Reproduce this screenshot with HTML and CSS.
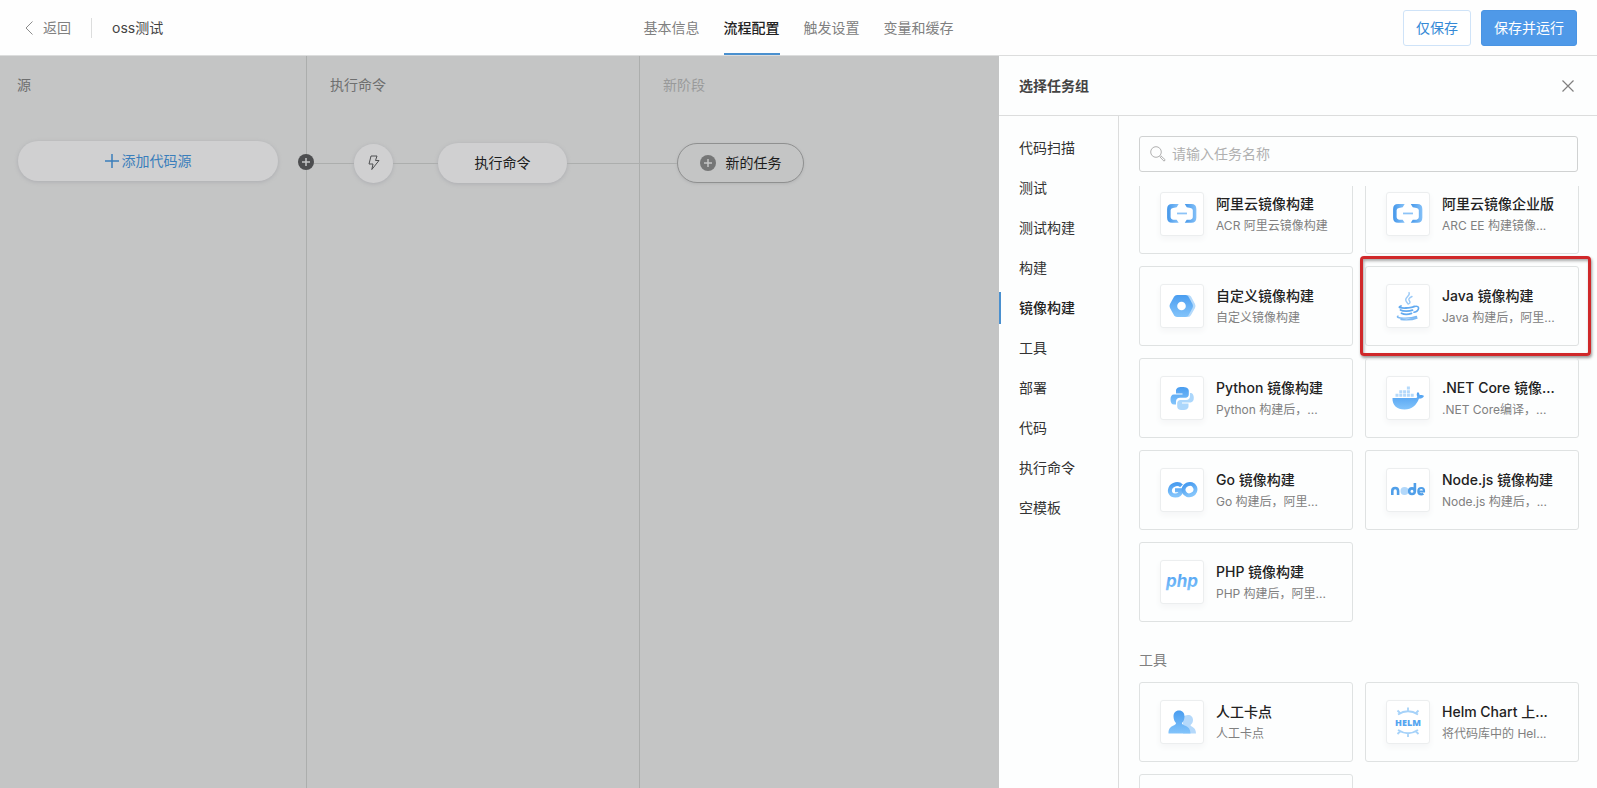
FILE: index.html
```html
<!DOCTYPE html>
<html lang="zh-CN">
<head>
    <meta charset="UTF-8">
    <title>oss测试</title>
    <link rel="stylesheet" href="styles.css">
</head>
<body>
    <!-- shared gradient for the task icons -->
    <svg class="defs" aria-hidden="true">
        <defs>
            <linearGradient id="blue" x1="0" y1="0" x2="1" y2="0">
                <stop offset="0" stop-color="#4597ea"/>
                <stop offset="1" stop-color="#85c1f8"/>
            </linearGradient>
            <linearGradient id="blueDown" x1="0" y1="0" x2="0" y2="1">
                <stop offset="0" stop-color="#4a9df0"/>
                <stop offset="1" stop-color="#83c4fb"/>
            </linearGradient>
        </defs>
        <symbol id="acr" viewBox="2 2 29 29">
            <path d="M13.500 7.500H7.500Q3 7.500 3 12v8q0 4.500 4.500 4.500h6l-1.800-2.800H8.300Q6.200 21 6.200 19.500v-6.500q0-1.500 2.100-1.900l3.400-.8z" fill="url(#blue)"/>
            <path d="M19 7.500h6q4.500 0 4.500 4.500v8q0 4.500-4.500 4.500h-6l1.800-2.800h3.400q2.100-.7 2.100-2.200v-6.500q0-1.500-2.100-1.900l-3.400-.8z" fill="url(#blue)"/>
            <rect x="12" y="15.200" width="9" height="1.600" fill="#8cc3f7"/>
        </symbol>
    </svg>

    <header class="topbar">
        <div class="topbar-left">
            <a href="#" class="back">
                <svg width="8" height="14" viewBox="0 0 8 14"><path d="M7.500.5 1 7l6.500 6.500" fill="none" stroke="#8c8c8c"/></svg>
                返回
            </a>
            <span class="divider"></span>
            <span class="pipeline-name">oss测试</span>
        </div>
        <nav class="tabs">
            <a href="#">基本信息</a>
            <a href="#" class="active">流程配置</a>
            <a href="#">触发设置</a>
            <a href="#">变量和缓存</a>
        </nav>
        <div class="actions">
            <button class="btn">仅保存</button>
            <button class="btn btn-primary">保存并运行</button>
        </div>
    </header>

    <main class="content">
        <section class="stage stage-source">
            <h2>源</h2>
            <button class="node node-source">
                <svg width="14" height="14" viewBox="0 0 14 14"><path d="M7 0v14M0 7h14" stroke="#3a7ebb" stroke-width="1.500"/></svg>
                添加代码源
            </button>
            <button class="add-stage" aria-label="添加阶段">
                <svg width="16" height="16" viewBox="0 0 16 16"><circle cx="8" cy="8" r="8" fill="#4d4e50"/><path d="M8 4v8M4 8h8" stroke="#c4c5c5" stroke-width="1.500"/></svg>
            </button>
        </section>
        <section class="stage stage-run">
            <h2>执行命令</h2>
            <div class="flow">
                <span class="line line-first"></span>
                <button class="node node-trigger" aria-label="触发">
                    <svg width="14" height="16" viewBox="0 0 14 16"><path d="M4 1h6L8.500 5.500H12L4.800 14.500 6 9H2z" fill="none" stroke="#4d4e50" stroke-linejoin="round"/></svg>
                </button>
                <span class="line line-mid"></span>
                <button class="node node-task">执行命令</button>
                <span class="line line-rest"></span>
            </div>
        </section>
        <section class="stage stage-new">
            <h2>新阶段</h2>
            <div class="flow">
                <span class="line line-new"></span>
                <button class="node node-new">
                    <svg width="16" height="16" viewBox="0 0 16 16"><circle cx="8" cy="8" r="8" fill="#757676"/><path d="M8 4v8M4 8h8" stroke="#c4c5c5" stroke-width="1.500"/></svg>
                    新的任务
                </button>
            </div>
        </section>

        <aside class="panel">
            <div class="panel-header">
                <h3>选择任务组</h3>
                <button class="close" aria-label="关闭">
                    <svg width="12" height="12" viewBox="0 0 12 12"><path d="m.5.5 11 11M11.500.5l-11 11" stroke="#808080" stroke-width="1.200"/></svg>
                </button>
            </div>
            <div class="panel-body">
                <nav class="groups">
                    <a href="#">代码扫描</a>
                    <a href="#">测试</a>
                    <a href="#">测试构建</a>
                    <a href="#">构建</a>
                    <a href="#" class="active">镜像构建</a>
                    <a href="#">工具</a>
                    <a href="#">部署</a>
                    <a href="#">代码</a>
                    <a href="#">执行命令</a>
                    <a href="#">空模板</a>
                </nav>
                <div class="tasks">
                    <label class="search">
                        <svg width="16" height="16" viewBox="0 0 16 16" fill="none" stroke="#b0b0b0"><circle cx="6" cy="6" r="5.300"/><path d="m9.800 10.800 1-1 4.400 4-1.200 1.400z"/></svg>
                        <input type="text" placeholder="请输入任务名称" aria-label="请输入任务名称">
                    </label>
                    <div class="task-list">
                        <div class="grid">
                            <button class="card">
                                <span class="icon"><svg viewBox="0 0 32 32"><use href="#acr"/></svg></span>
                                <span class="text"><b>阿里云镜像构建</b><small>ACR 阿里云镜像构建</small></span>
                            </button>
                            <button class="card">
                                <span class="icon"><svg viewBox="0 0 32 32"><use href="#acr"/></svg></span>
                                <span class="text"><b>阿里云镜像企业版</b><small>ARC EE 构建镜像...</small></span>
                            </button>
                            <button class="card">
                                <span class="icon"><svg viewBox="0 0 32 32">
                                    <path d="M12 5h10q2 0 3 1.500l4 7.500q1 2 0 4l-4 7q-1 2-3 2H12z" fill="#b5dafb"/>
                                    <path d="M11 5h8.500q2 0 3 1.700l4 7.300q1 2 0 4l-4 7.300q-1 1.700-3 1.700H11q-2 0-3-1.700L4 18q-1-2 0-4l4-7.300Q9 5 11 5z" fill="url(#blueDown)"/>
                                    <circle cx="15.500" cy="16" r="4.300" fill="#fff"/>
                                </svg></span>
                                <span class="text"><b>自定义镜像构建</b><small>自定义镜像构建</small></span>
                            </button>
                            <button class="card highlighted">
                                <span class="icon"><svg viewBox="0 0 32 32" fill="none" stroke="#62aaf0" stroke-linecap="round">
                                    <path d="M17 2.500c2 3.500-5 4.500-3 8.500.5 1 1.500 2 2 3M20 6.500c-3 1.500-4 2.500-2.500 4.500 1 1.500.5 2-1 3" stroke="#9ccaf7" stroke-width="1.400"/>
                                    <path d="M9 16c-4 1.500 0 2.200 5 2 4-.2 8-1 8-1.500" stroke-width="1.800"/>
                                    <path d="M8.500 20c2.500 1.500 8.500 1.500 12 .2M9.500 23.200c2.500 1.400 7 1.300 10 .2" stroke-width="1.800"/>
                                    <path d="M22.500 16.500c6-1.500 5 4.500-.5 5.800" stroke-width="1.600"/>
                                    <path d="M6 26c-4 2.500 12 3 18.500.5M9 29.500c5 .6 12 .2 16-1.500" stroke="#7db9f3" stroke-width="1.400"/>
                                </svg></span>
                                <span class="text"><b>Java 镜像构建</b><small>Java 构建后，阿里...</small></span>
                            </button>
                            <button class="card">
                                <span class="icon"><svg viewBox="0 0 32 32">
                                    <path d="M16 5c-4.500 0-6 1.500-6 4v2.500h6.500v1H8c-2.500 0-3.500 2-3.500 5s1.200 5 3.500 5h2v-2.800c0-2.500 1.500-4 4-4h5.500c2 0 3.300-1.300 3.300-3.200V9c0-2.700-2.300-4-6.800-4z" fill="url(#blueDown)"/>
                                    <path d="M16.500 28c4.500 0 6-1.500 6-4v-2.500H16v-1h8.500c2.300 0 3.300-2 3.300-4.700s-1-4.800-3.300-4.800H24V14c0 2.500-1.500 4-4 4h-5.500c-2 0-3.300 1.300-3.300 3.200V24c0 2.700 1.300 4 5.300 4z" fill="#acd7fc"/>
                                </svg></span>
                                <span class="text"><b>Python 镜像构建</b><small>Python 构建后，...</small></span>
                            </button>
                            <button class="card">
                                <span class="icon"><svg viewBox="0 0 32 32">
                                    <path d="M.5 16H24c1 0 1.500-.7 1-2-.6-1.500-.2-3 1-4 1 .8 1.600 2 1.600 3.200 1.500-.3 3.400 0 4.400.8-1 2-2.800 2.800-5 2.600C24.500 23.500 20 27.500 12.500 27.500 5 27.500.1 23 .5 16z" fill="url(#blueDown)"/>
                                    <path d="M3.500 13.300h18.200M7.300 9.700h10.600M14.900 6h3" stroke="#b4d9fb" stroke-width="3" stroke-dasharray="3 .8"/>
                                </svg></span>
                                <span class="text"><b>.NET Core 镜像...</b><small>.NET Core编译，...</small></span>
                            </button>
                            <button class="card">
                                <span class="icon"><svg viewBox="0 0 32 32" fill="none" stroke="url(#blueDown)" stroke-width="4">
                                    <path d="M15.500 11.800C12.500 8.800 6.500 9.800 4.500 14c-1.800 4 .5 7.500 4.700 7.500 3.500 0 5.600-2 6.200-5.200H9"/>
                                    <ellipse cx="23.500" cy="15.600" rx="6" ry="5.600" transform="rotate(-25 23.500 15.600)"/>
                                </svg></span>
                                <span class="text"><b>Go 镜像构建</b><small>Go 构建后，阿里...</small></span>
                            </button>
                            <button class="card">
                                <span class="icon"><svg class="wide" viewBox="0 0 36 32" fill="none" stroke="#509fe9" stroke-width="2.600">
                                    <path d="M2.300 21v-4q0-3 2.900-3t2.900 3v4"/>
                                    <circle cx="14.500" cy="17" r="4" fill="#b3d8fa" stroke="none"/>
                                    <circle cx="22" cy="17.200" r="2.800"/><path d="M24.900 9v8.500"/>
                                    <path d="M29 17.500h5q.3-3.500-2.700-3.500-3 0-3 3.200t3 3.200q1.200 0 2-.8" stroke-width="2.200"/>
                                </svg></span>
                                <span class="text"><b>Node.js 镜像构建</b><small>Node.js 构建后，...</small></span>
                            </button>
                            <button class="card">
                                <span class="icon"><svg class="wide" viewBox="0 0 36 32"><text x="18" y="21" text-anchor="middle" class="php" fill="url(#blueDown)">php</text></svg></span>
                                <span class="text"><b>PHP 镜像构建</b><small>PHP 构建后，阿里...</small></span>
                            </button>
                        </div>
                        <h4>工具</h4>
                        <div class="grid">
                            <button class="card">
                                <span class="icon"><svg viewBox="0 0 32 32">
                                    <path d="M22 9c3 0 5 2 5 5 0 2-1 4-2.500 5 0 2 5.500 1.500 5.500 8.500H17V10.500Q19 9 22 9z" fill="#b5d9fb"/>
                                    <path d="M13 4.500c3.500 0 5.500 2.500 5.500 6 0 2.500-1 5-2.500 6.500 0 3.500 8.500 1.500 8.500 10.500h-22C2.500 18.500 10 20.500 10 17c-1.500-1.500-2.500-4-2.500-6.500 0-3.500 2-6 5.500-6z" fill="url(#blueDown)"/>
                                </svg></span>
                                <span class="text"><b>人工卡点</b><small>人工卡点</small></span>
                            </button>
                            <button class="card">
                                <span class="icon"><svg viewBox="0 0 32 32" fill="none" stroke="#a6d2f9" stroke-width="1.800">
                                    <path d="M6 8.500q10-6.500 20 0M16 4.500V1.500M8.500 7.500l-3-3M23.500 7.500l3-3"/>
                                    <path d="M6 24q10 6.500 20 0M16 28v3M8.500 25l-3 3M23.500 25l3 3"/>
                                    <text x="16" y="20" text-anchor="middle" class="helm">HELM</text>
                                </svg></span>
                                <span class="text"><b>Helm Chart 上...</b><small>将代码库中的 Hel...</small></span>
                            </button>
                            <button class="card" aria-label="工具"></button>
                        </div>
                    </div>
                </div>
            </div>
        </aside>
    </main>
</body>
</html>
```
FILE: styles.css
```css
* { box-sizing: border-box; }
body { margin: 0; height: 100vh; display: flex; flex-direction: column; overflow: hidden; background: #fdfefe; color: #222; font: 14px/20px Inter, "Noto Sans CJK SC", sans-serif; }
a { color: inherit; text-decoration: none; }
button { font: inherit; color: inherit; padding: 0; border: 0; background: none; cursor: pointer; }
svg { display: block; flex: none; }
h2, h3, h4 { margin: 0; font-size: 14px; }
.defs { position: absolute; width: 0; height: 0; }

/* top bar */
.topbar { flex: none; display: grid; grid-template-columns: 1fr auto 1fr; align-items: center; height: 56px; padding: 0 20px; border-bottom: 1px solid #dcdddd; background: #fefefe; }
.topbar-left { display: flex; align-items: center; gap: 20px; padding-left: 5px; }
.back { display: flex; align-items: center; gap: 10px; color: #808080; }
.divider { width: 1px; height: 20px; background: #dcdddd; }
.pipeline-name { color: #444; }
.tabs { display: flex; gap: 24px; height: 55px; color: #808080; }
.tabs a { line-height: 55px; }
.tabs .active { color: #222; font-weight: 500; border-bottom: 2px solid #4a90cf; }
.actions { display: flex; justify-content: flex-end; gap: 10px; }
.btn { height: 36px; padding: 0 12px; border: 1px solid #cfe3f8; border-radius: 3px; background: #fff; color: #3489d6; }
.btn-primary { border-color: #4a94e3; background: #4f99e8; color: #fff; }

/* pipeline stages */
.content { flex: 1; min-height: 0; display: flex; background: #c4c5c5; }
.stage { position: relative; border-right: 1px solid #acaead; }
.stage h2 { margin: 19px 0 48px; padding-left: 23px; font-weight: 400; color: #6e6f6f; }
.stage-source { flex: 0 0 307px; }
.stage-source h2 { margin-bottom: 46px; padding-left: 17px; }
.stage-run { flex: 0 0 333px; }
.stage-new { flex: 1; border-right: 0; }
.stage-new h2 { color: #999a9a; }
.flow { display: flex; align-items: center; }
.line { height: 1px; background: #acaead; }
.line-first { width: 47px; }
.line-mid { width: 45px; }
.line-rest { flex: 1; }
.line-new { width: 37px; }
.node { display: flex; align-items: center; justify-content: center; height: 40px; border-radius: 20px; background: #d0d0d1; box-shadow: 0 1px 4px #acadb1; color: #1c1c1c; }
.node-source { width: 260px; margin-left: 18px; gap: 3px; color: #3a7ebb; }
.node-trigger { width: 39px; height: 39px; }
.node-task { width: 129px; }
.node-new { width: 127px; gap: 10px; border: 1px solid #8f9090; background: #c4c5c5; box-shadow: 0 1px 3px #b2b3b4; }
.add-stage { position: absolute; z-index: 1; right: -8px; top: 98px; }

/* task picker */
.panel { flex: 0 0 598px; display: flex; flex-direction: column; background: #fdfefe; }
.panel-header { flex: none; display: flex; align-items: center; justify-content: space-between; height: 60px; padding: 0 23px 0 20px; border-bottom: 1px solid #dcdddd; }
.panel-header h3 { color: #444; }
.panel-body { flex: 1; min-height: 0; display: flex; }
.groups { flex: 0 0 120px; padding-top: 12px; border-right: 1px solid #dcdddd; }
.groups a { display: block; margin: 4px 0 8px; padding-left: 20px; line-height: 32px; color: #333; }
.groups .active { padding-left: 18px; border-left: 2px solid #4a90cf; color: #222; font-weight: 500; }
.tasks { flex: 1; min-width: 0; display: flex; flex-direction: column; padding-top: 20px; }
.search { flex: none; display: flex; align-items: center; gap: 6px; height: 36px; margin: 0 19px 14px 20px; padding: 0 10px; border: 1px solid #d0d2d2; border-radius: 3px; }
.search input { flex: 1; min-width: 0; padding: 0; border: 0; outline: 0; background: none; font: inherit; }
.search input::placeholder { color: #b0b0b0; }
.task-list { flex: 1; min-height: 0; overflow: hidden; padding: 0 18px 0 20px; }
.task-list h4 { margin: 28px 0 12px; font-weight: 400; color: #808080; }
.grid { display: grid; grid-template-columns: 1fr 1fr; grid-auto-rows: 80px; gap: 12px; }
/* list is scrolled down a little */
.grid:first-child { margin-top: -12px; }
.card { position: relative; display: flex; align-items: center; gap: 12px; min-width: 0; padding: 0 20px; border: 1px solid #dfe2e2; border-radius: 3px; text-align: left; }
.icon { flex: none; display: flex; align-items: center; justify-content: center; width: 44px; height: 44px; border: 1px solid #eceeef; border-radius: 3px; background: #fff; box-shadow: 0 3px 6px #f4f5f6; }
.icon svg { width: 32px; height: 32px; }
.icon .wide { width: 36px; }
.text { min-width: 0; white-space: nowrap; }
.text b { display: block; line-height: 24px; font-weight: 500; }
.text small { display: block; font-size: 12px; line-height: 20px; color: #808080; }
.highlighted::after { content: ""; position: absolute; inset: -11px -13px -11px -6px; border: 3px solid #d0282a; border-radius: 4px; box-shadow: 1px 2px 3px #999, inset 1px 2px 3px #aaa; }
.php { font: italic 700 17px Inter, sans-serif; }
.helm { font: 800 9px "Open Sans", sans-serif; fill: #56a5f0; stroke: none; }
```
